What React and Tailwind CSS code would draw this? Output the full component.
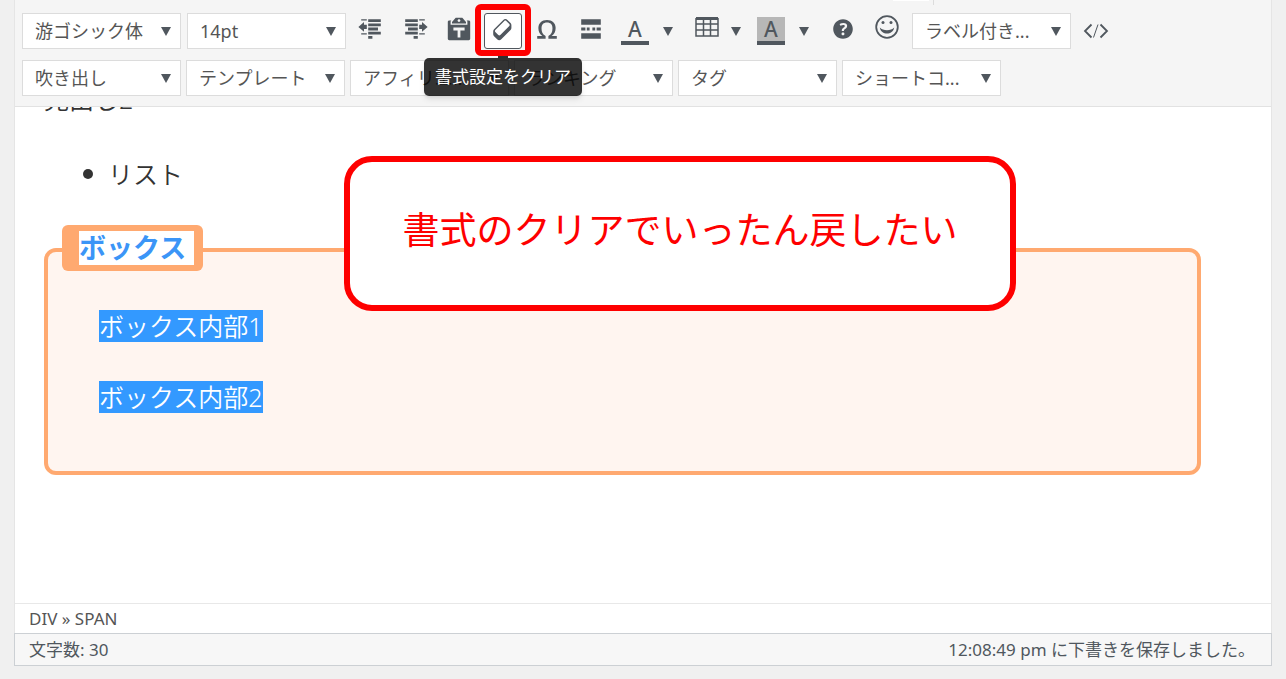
import React from "react";

const ICONS = {
  outdent:
    "M7 4V3H3v1h4zm10 1V3H8v2h9zM7 7H5V5L1 8.5 5 12v-2h2V7zm10 1V6H8v2h9zm-2 3V9H8v2h7zm2 3v-2H8v2h9zM7 14v-1H3v1h4zm4 3v-2H8v2h3z",
  indent:
    "M3 5V3h9v2H3zm10-1V3h4v1h-4zm0 3h2V5l4 3.5-4 3.5v-2h-2V7zM3 8V6h9v2H3zm2 3V9h7v2H5zm-2 3v-2h9v2H3zm10 0v-1h4v1h-4zm-4 3v-2h3v2H9z",
  paste:
    "M12.38 2L15 5v1H5V5l2.64-3h4.74zM10 5c.55 0 1-.44 1-1 0-.55-.45-1-1-1s-1 .45-1 1c0 .56.45 1 1 1zm5.45-1H17c.55 0 1 .45 1 1v12c0 .56-.45 1-1 1H3c-.55 0-1-.44-1-1V5c0-.55.45-1 1-1h1.55L4 4.63V7h12V4.63zM14 11V9H6v2h3v5h2v-5h3z",
  eraser:
    "M14.29 4.59l1.1 1.11c.41.4.61.94.61 1.47v2.12c0 .53-.2 1.07-.61 1.47l-6.63 6.63c-.4.41-.94.61-1.47.61s-1.07-.2-1.47-.61l-1.11-1.1-1.1-1.11c-.41-.4-.61-.94-.61-1.47v-2.12c0-.54.2-1.07.61-1.48l6.63-6.62c.4-.41.94-.61 1.47-.61s1.06.2 1.47.61zm-6.21 9.7l6.42-6.42c.39-.39.39-1.03 0-1.43L12.36 4.3c-.19-.19-.45-.29-.72-.29s-.52.1-.71.29l-6.42 6.42c-.39.4-.39 1.04 0 1.43l2.14 2.14c.38.38 1.04.38 1.43 0z",
  omega:
    "M10 5.4c1.27 0 2.24.36 2.91 1.08.66.71 1 1.76 1 3.13 0 1.28-.23 2.37-.69 3.27-.47.89-1.27 1.52-2.22 2.12v2h6v-2h-3.69c.92-.64 1.62-1.34 2.12-2.34.49-1.01.74-2.13.74-3.35 0-1.78-.55-3.19-1.65-4.22S11.92 3.54 10 3.54s-3.43.53-4.52 1.57c-1.1 1.04-1.65 2.44-1.65 4.2 0 1.21.24 2.31.73 3.33.48 1.01 1.19 1.71 2.1 2.36H3v2h6v-2c-.98-.64-1.8-1.28-2.24-2.17-.45-.89-.67-1.96-.67-3.22 0-1.37.33-2.41 1-3.13C7.75 5.76 8.72 5.4 10 5.4z",
  more: "M3 3h14v4H3zM3 9h3v2H3zM7 9h2v2H7zM11 9h2v2h-2zM14 9h3v2h-3zM3 13h14v4H3z",
  help: "M17 10c0-3.87-3.14-7-7-7-3.87 0-7 3.13-7 7s3.13 7 7 7c3.86 0 7-3.13 7-7zm-6.3 1.48H9.14v-.43c0-.38.08-.7.24-.98s.46-.57.88-.89c.41-.29.68-.53.81-.71.14-.18.2-.39.2-.62 0-.25-.09-.44-.28-.58-.19-.13-.45-.19-.79-.19-.58 0-1.25.19-2 .57l-.64-1.28c.87-.49 1.8-.74 2.77-.74.81 0 1.45.2 1.92.58.48.39.71.91.71 1.55 0 .43-.09.8-.29 1.11-.19.32-.57.67-1.11 1.06-.38.28-.61.49-.71.63-.1.15-.15.34-.15.57v.35zm-1.47 2.74c-.18-.17-.27-.42-.27-.73 0-.33.08-.58.26-.75s.43-.25.77-.25c.32 0 .57.09.75.26s.27.42.27.74c0 .3-.09.55-.27.72-.18.18-.43.27-.75.27-.33 0-.58-.09-.76-.26z",
};

function Glyph({ name }) {
  return (
    <svg viewBox="0 0 20 20" className="size-7 shrink-0 fill-current" aria-hidden="true">
      <path d={ICONS[name]} />
    </svg>
  );
}

function Caret() {
  return (
    <svg viewBox="0 0 10 9" className="h-[9px] w-[10px] shrink-0 fill-[#50575e]" aria-hidden="true">
      <path d="M0 0h10L5 9z" />
    </svg>
  );
}

function ToolButton({ label, children }) {
  return (
    <button
      type="button"
      aria-label={label}
      className="flex h-9 w-[38px] shrink-0 items-center justify-center pb-1"
    >
      {children}
    </button>
  );
}

function CaretButton({ label, narrow }) {
  return (
    <button
      type="button"
      aria-label={label}
      className={
        narrow
          ? "flex h-9 w-5 shrink-0 items-center justify-center"
          : "flex h-9 w-7 shrink-0 items-center justify-center"
      }
    >
      <Caret />
    </button>
  );
}

function Dropdown({ label, value }) {
  return (
    <label className="grid w-[159px] shrink-0 items-center">
      <select
        aria-label={label}
        className="col-start-1 row-start-1 h-9 w-full appearance-none border border-[#dcdcdc] bg-white pr-6 pl-3 text-[18px] text-[#555]"
      >
        <option>{value}</option>
      </select>
      <span className="pointer-events-none col-start-1 row-start-1 justify-self-end pr-[10px]">
        <Caret />
      </span>
    </label>
  );
}

function ClearFormatButton() {
  return (
    <div className="relative z-10 shrink-0">
      <button
        type="button"
        aria-label="書式設定をクリア"
        aria-describedby="clear-tip"
        className="flex h-9 w-[38px] items-center justify-center rounded-[3px] border border-[#50575e] bg-white pb-1"
      >
        <Glyph name="eraser" />
      </button>
      <div className="pointer-events-none absolute -inset-x-[9px] -top-[9px] -bottom-[7px] rounded-[6px] border-[6px] border-[#fe0000]" />
      <div
        id="clear-tip"
        role="tooltip"
        className="absolute top-[43px] left-1/2 flex -translate-x-1/2 flex-col items-center"
      >
        <span className="h-[2px] w-[10px] bg-black/80" />
        <span className="flex h-[38px] w-[158px] items-center justify-center rounded-[5px] bg-black/80 text-[17px] whitespace-nowrap text-white shadow-md">
          書式設定をクリア
        </span>
      </div>
    </div>
  );
}

function Toolbar() {
  return (
    <div className="relative flex flex-col gap-[11px] border-b border-[#e2e2e2] bg-[#f5f5f5] px-[7px] pt-[13px] pb-[10px] text-[#50575e]">
      <div className="absolute top-0 left-[878px] flex h-[5px] w-[41px] items-start border-r border-[#dcdcdc]">
        <span className="h-px w-9 bg-white" />
      </div>
      <div className="flex items-center gap-[6px]">
        <Dropdown label="フォント" value="游ゴシック体" />
        <Dropdown label="フォントサイズ" value="14pt" />
        <ToolButton label="インデントを減らす"><Glyph name="outdent" /></ToolButton>
        <ToolButton label="インデントを増やす"><Glyph name="indent" /></ToolButton>
        <ToolButton label="テキストとしてペースト"><Glyph name="paste" /></ToolButton>
        <ClearFormatButton />
        <ToolButton label="特殊文字"><Glyph name="omega" /></ToolButton>
        <ToolButton label="続きを読む"><Glyph name="more" /></ToolButton>
        <div className="flex">
          <ToolButton label="テキスト色">
            <span className="mt-1 flex w-7 items-center justify-center border-b-4 border-current text-[21px] leading-6 font-medium">
              A
            </span>
          </ToolButton>
          <CaretButton label="テキスト色を選択" />
        </div>
        <div className="flex">
          <ToolButton label="テーブル">
            <svg viewBox="0 0 24 20" className="mb-1 h-5 w-6" fill="none" stroke="currentColor" aria-hidden="true">
              <path d="M1 1.5h22" strokeWidth="3" />
              <path d="M1 1v18h22V1M1 7h22M1 13h22M8.500 1v18M15.500 1v18" strokeWidth="1.500" />
            </svg>
          </ToolButton>
          <CaretButton label="テーブルのメニュー" narrow />
        </div>
        <div className="flex">
          <ToolButton label="背景色">
            <span className="mt-1 flex w-7 items-center justify-center border-b-4 border-current bg-[#b7b7b7] text-[21px] leading-6 font-medium">
              A
            </span>
          </ToolButton>
          <CaretButton label="背景色を選択" />
        </div>
        <ToolButton label="ヘルプ"><Glyph name="help" /></ToolButton>
        <ToolButton label="絵文字">
          <svg viewBox="0 0 24 24" className="mb-1 size-6" aria-hidden="true">
            <circle cx="12" cy="12" r="10.800" fill="none" stroke="currentColor" strokeWidth="1.800" />
            <circle cx="8" cy="7.500" r="1.500" fill="currentColor" />
            <circle cx="16" cy="7.500" r="1.500" fill="currentColor" />
            <path d="M4.800 12.500C8 16 16 16 19.200 12.500 18 20.500 6 20.500 4.800 12.500z" fill="currentColor" />
          </svg>
        </ToolButton>
        <Dropdown label="ラベル" value="ラベル付き..." />
        <ToolButton label="ソースコード">
          <svg viewBox="0 0 26 16" className="mt-1 h-4 w-[26px]" fill="none" stroke="currentColor" aria-hidden="true">
            <path d="M8.500 1.500L2 8l6.500 6.500M17.500 1.500L24 8l-6.500 6.500" strokeWidth="1.800" />
            <path d="M15 1.500l-4.500 13" strokeWidth="1" />
          </svg>
        </ToolButton>
      </div>
      <div className="flex items-center gap-[5px]">
        <Dropdown label="吹き出し" value="吹き出し" />
        <Dropdown label="テンプレート" value="テンプレート" />
        <Dropdown label="アフィリエイト" value="アフィリエ..." />
        <Dropdown label="ランキング" value="ランキング" />
        <Dropdown label="タグ" value="タグ" />
        <Dropdown label="ショートコード" value="ショートコ..." />
      </div>
    </div>
  );
}

function Selected({ children }) {
  return (
    <p>
      <span className="inline-block bg-[#3399ff] text-[25px] leading-8 text-white">{children}</span>
    </p>
  );
}

function EditorBody() {
  return (
    <div className="relative flex-1 overflow-hidden bg-white pr-[70px] pb-32 pl-[29px] font-[350] text-[#333]">
      <p className="-mt-[26px] text-[25px] leading-9">見出し2</p>
      <ul className="mt-[39px] pl-[39px]">
        <li className="flex items-center gap-[15px] text-[25px] leading-9">
          <span className="size-[10px] rounded-full bg-[#333]" />
          リスト
        </li>
      </ul>
      <section className="relative mt-[56px] rounded-[12px] border-4 border-[#ffa970] bg-[#fff5f0] px-[51px] pt-[58px] pb-[58px]">
        <h2 className="absolute -top-[27px] left-[14px] rounded-[6px] bg-[#ffa970] py-[6px] pr-[9px] pl-[17px]">
          <span className="block bg-white pr-[8px] text-[27px] leading-[34px] font-bold text-[#3b95f7]">
            ボックス
          </span>
        </h2>
        <div className="flex flex-col gap-[39px]">
          <Selected>ボックス内部1</Selected>
          <Selected>ボックス内部2</Selected>
        </div>
      </section>
      <div className="absolute top-[49px] left-[329px] flex h-[155px] w-[672px] items-center justify-center rounded-[28px] border-[6px] border-[#fe0000] bg-white pb-2 text-[37px] font-normal whitespace-nowrap text-[#fe0000]">
        書式のクリアでいったん戻したい
      </div>
    </div>
  );
}

export default function App() {
  return (
    <main
      lang="ja"
      className="flex min-h-screen flex-col bg-[#f0f0f0] px-[14px] pb-[13px] font-['Noto_Sans','Noto_Sans_CJK_JP',sans-serif]"
    >
      <div className="flex flex-1 flex-col border-x border-[#e5e5e5]">
        <Toolbar />
        <EditorBody />
        <div className="border-t border-[#e8e8e8] bg-white px-[14px] text-[17px] leading-[29px] text-[#555]">
          DIV » SPAN
        </div>
      </div>
      <footer className="flex justify-between border border-[#ccd0d4] bg-[#f7f7f7] pr-4 pl-[14px] text-[17px] leading-[31px] text-[#50575e]">
        <span>文字数: 30</span>
        <span>12:08:49 pm に下書きを保存しました。</span>
      </footer>
    </main>
  );
}
